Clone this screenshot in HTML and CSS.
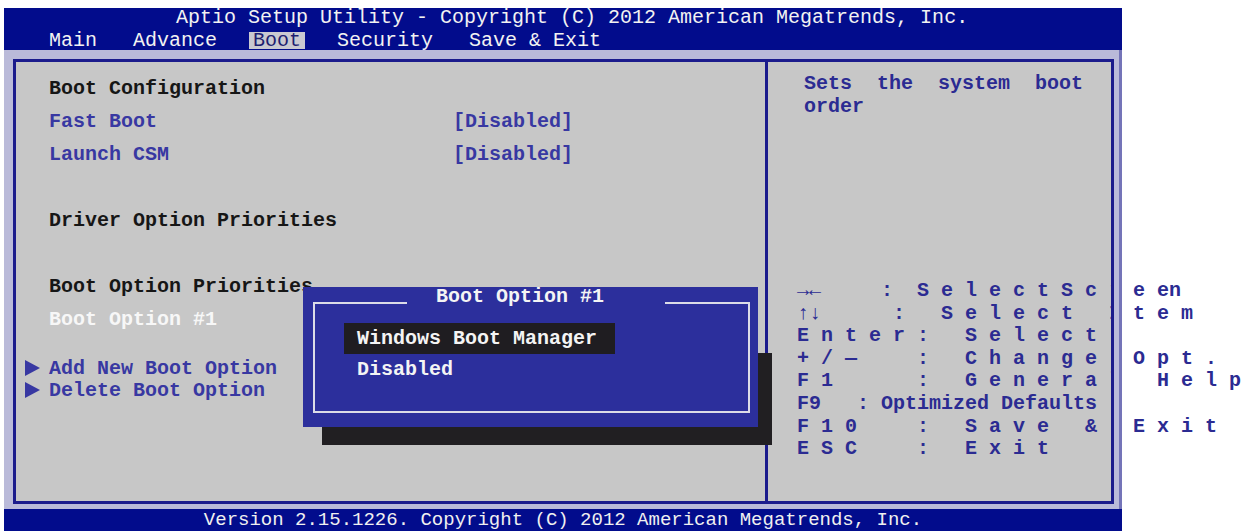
FILE: index.html
```html
<!DOCTYPE html>
<html lang="en">
<head>
    <meta charset="UTF-8">
    <meta name="viewport" content="width=device-width, initial-scale=1.0">
    <title>Aptio Setup Utility</title>
    <link rel="stylesheet" href="styles.css">
</head>
<body>

    <div class="screen">
        <header class="topbar">
            <div class="title">Aptio Setup Utility - Copyright (C) 2012 American Megatrends, Inc.</div>
            <nav class="menu">
                <span class="tab">Main</span>
                <span class="tab">Advance</span>
                <span class="tab active">Boot</span>
                <span class="tab">Security</span>
                <span class="tab">Save &amp; Exit</span>
            </nav>
        </header>

        <main class="frame">
            <div class="panes">
                <!-- Boot page items -->
                <section class="settings">
                    <div class="row heading">Boot Configuration</div>
                    <div class="row option"><span class="label">Fast Boot</span><span>[Disabled]</span></div>
                    <div class="row option"><span class="label">Launch CSM</span><span>[Disabled]</span></div>
                    <div class="row"></div>
                    <div class="row heading">Driver Option Priorities</div>
                    <div class="row"></div>
                    <div class="row heading">Boot Option Priorities</div>
                    <div class="row selected">Boot Option #1</div>
                    <div class="submenu first">Add New Boot Option</div>
                    <div class="submenu">Delete Boot Option</div>
                </section>

                <!-- Help column -->
                <aside class="help">
                    <p class="help-text">Sets the system boot order</p>
<pre class="keys">→←     :  S e l e c t S c r e en
↑↓      :   S e l e c t   I t e m
E n t e r :   S e l e c t
+ / —     :   C h a n g e   O p t .
F 1       :   G e n e r a l   H e l p
F9   : Optimized Defaults
F 1 0     :   S a v e   &amp;   E x i t
E S C     :   E x i t</pre>
                </aside>

                <!-- Option picker dialog -->
                <div class="popup-shadow"></div>
                <div class="popup">
                    <div class="popup-frame">
                        <div class="popup-title">Boot Option #1</div>
                        <ul class="choices">
                            <li class="current">Windows Boot Manager</li>
                            <li>Disabled</li>
                        </ul>
                    </div>
                </div>
            </div>
        </main>

        <footer class="footer">Version 2.15.1226. Copyright (C) 2012 American Megatrends, Inc.</footer>
    </div>

</body>
</html>
```

FILE: styles.css
```css
html, body {
    margin: 0;
    padding: 0;
    height: 100%;
    overflow: hidden;
    background-color: #fff;
}
body {
    font-family: "Liberation Mono", "DejaVu Sans Mono", monospace;
    font-size: 20px;
}
.screen {
    width: 1118px;
    margin: 8px 0 0 4px;
}

/* top title bar and tabs */
.topbar {
    background-color: #020c8c;
    color: #f2f2f2;
    height: 42px;
}
.title {
    height: 20px;
    line-height: 20px;
    padding-left: 172px;
    white-space: pre;
}
.menu {
    display: flex;
    gap: 36px;
    margin-top: 4px;
    padding-left: 45px;
}
.tab {
    height: 17px;
    line-height: 17px;
    white-space: pre;
}
.tab.active {
    background-color: #c9c9d1;
    color: #1e1e70;
    padding: 0 4px;
    margin: 0 -4px;
}

/* lavender frame round the panels */
.frame {
    position: relative;
    background-color: #babad9;
    padding: 9px 8px 5px 9px;
}
.frame::after {
    content: "";
    position: absolute;
    top: 0;
    right: 0;
    bottom: 0;
    width: 8px;
    box-sizing: border-box;
    background-color: #babad9;
    border-right: 3px solid #7474b8;
}
.panes {
    position: relative;
    height: 445px;
    box-sizing: border-box;
    padding: 3px;
    background-color: #c7c7c7;
    display: grid;
    grid-template-columns: 749px 346px;
    font-weight: bold;
}
.panes::after {
    content: "";
    position: absolute;
    inset: 0;
    border: 3px solid #1b1b8c;
    pointer-events: none;
}

/* left column */
.settings {
    padding: 9.5px 0 0 33px;
}
.row {
    display: flex;
    height: 33px;
    line-height: 33px;
    white-space: pre;
}
.label {
    width: 404px;
}
.heading {
    color: #161616;
}
.option {
    color: #3838a2;
}
.selected {
    color: #f7f7f7;
}
.submenu {
    display: flex;
    align-items: center;
    height: 22px;
    margin-left: -24px;
    color: #3838a2;
}
.submenu.first {
    margin-top: 21.5px;
}
.submenu::before {
    content: "";
    border-left: 15px solid #3838a2;
    border-top: 8px solid transparent;
    border-bottom: 8px solid transparent;
    margin-right: 9px;
}

/* right column */
.help {
    border-left: 3px solid #1b1b8c;
    padding: 10px 0 0 36px;
    color: #2b2b92;
}
.help-text {
    margin: 0;
    width: 279px;
    text-align: justify;
    line-height: 23px;
}
.keys {
    margin: 162px 0 0 -7px;
    font: inherit;
    line-height: 22.6px;
    white-space: pre;
}

/* popup dialog */
.popup-shadow {
    position: absolute;
    left: 309px;
    top: 294px;
    width: 450px;
    height: 92px;
    background-color: #211f22;
}
.popup {
    position: absolute;
    left: 290px;
    top: 228px;
    width: 455px;
    height: 140px;
    box-sizing: border-box;
    padding: 15px 8px 14px 10px;
    background-color: #2c2f9c;
    color: #f4f4f4;
}
.popup-frame {
    height: 100%;
    box-sizing: border-box;
    border: 2px solid #dcdce8;
}
.popup-title {
    width: fit-content;
    margin: -17px 0 0 92px;
    padding: 0 61px 0 29px;
    line-height: 20px;
    background-color: #2c2f9c;
}
.choices {
    list-style: none;
    margin: 16px 0 0 29px;
    padding: 0;
}
.choices li {
    width: 258px;
    height: 31px;
    line-height: 31px;
    padding-left: 13px;
}
.choices li.current {
    background-color: #1f1d21;
}

/* bottom version bar */
.footer {
    background-color: #020c8c;
    color: #f0f0f0;
    height: 22px;
    line-height: 22px;
    font-size: 19px;
    text-align: center;
}
```
